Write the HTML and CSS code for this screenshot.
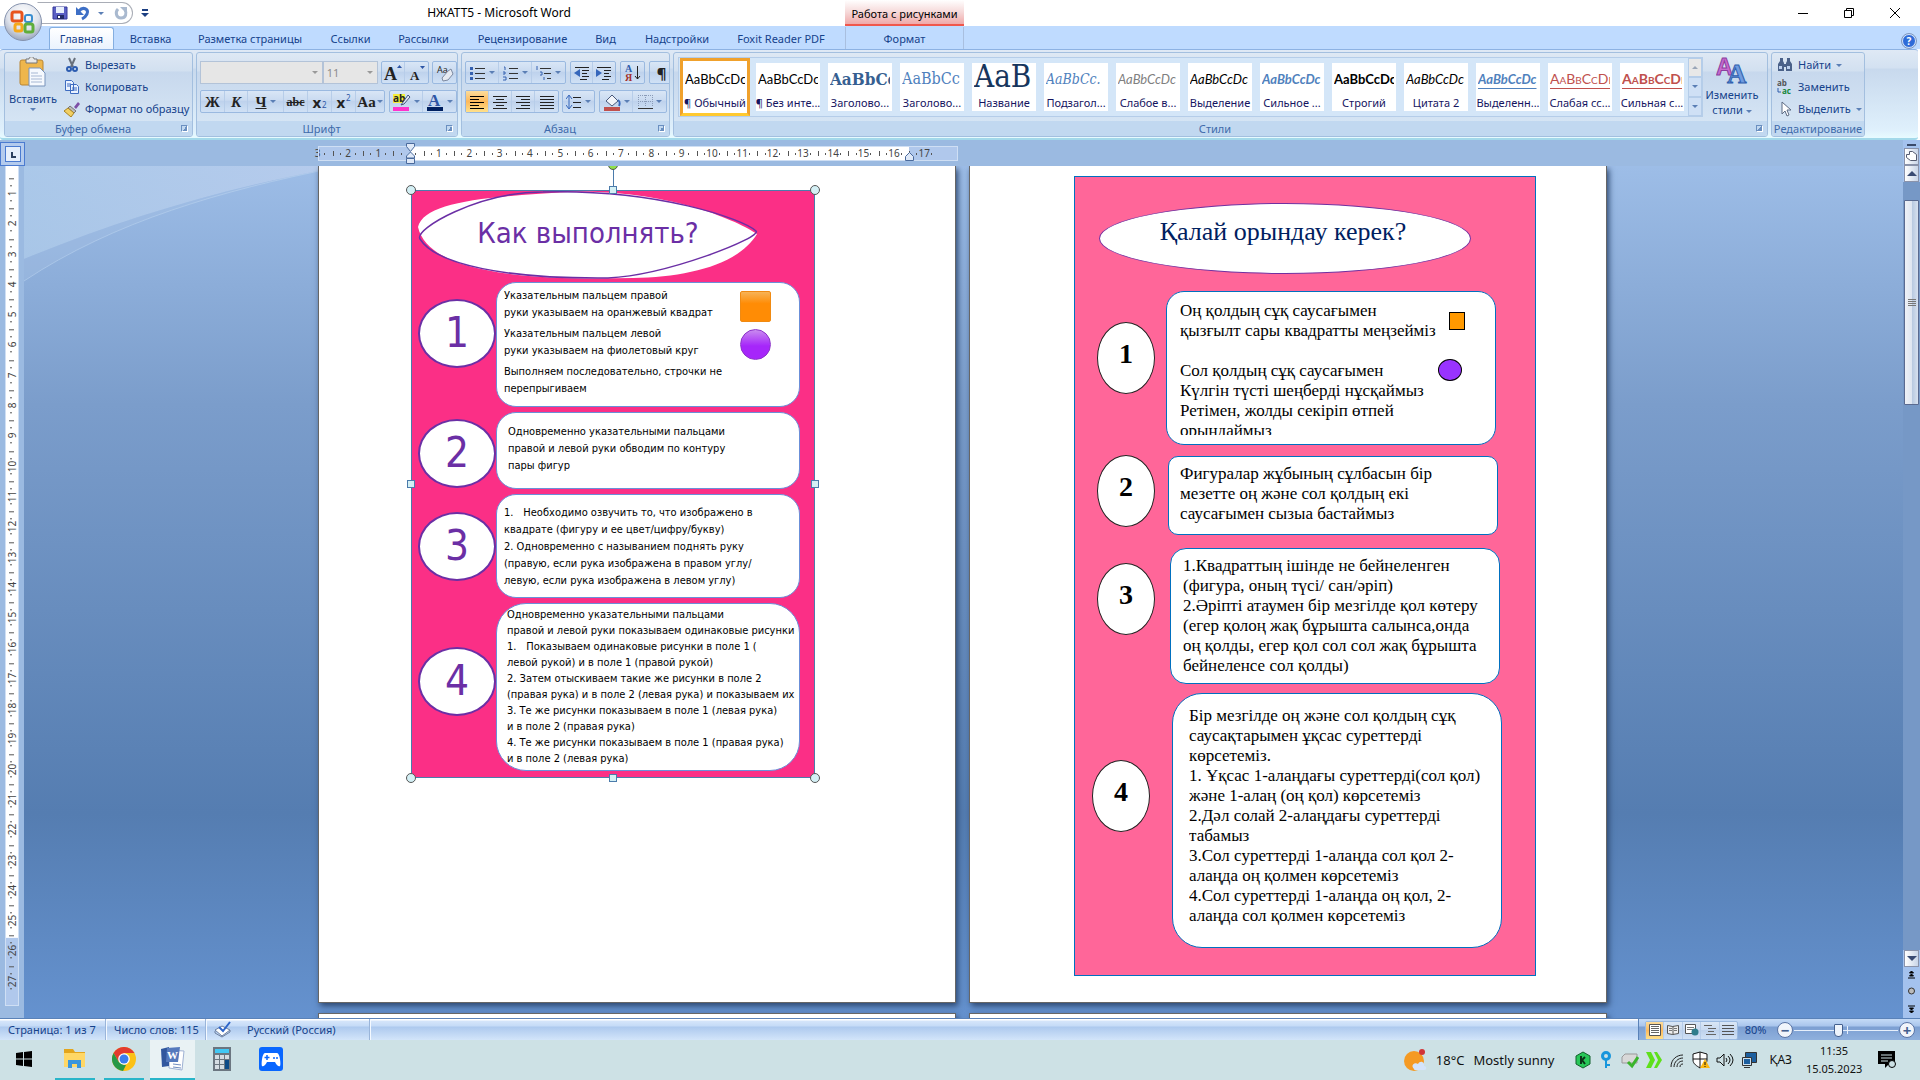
FILE: index.html
```html
<!DOCTYPE html>
<html lang="ru">
<head>
<meta charset="utf-8">
<title>НЖАТТ5 - Microsoft Word</title>
<link rel="stylesheet" href="styles.css">
</head>
<body>
<header class="titlebar">
  <div class="quick">
    <button class="flat" aria-label="Сохранить"><svg width="16" height="16" viewBox="0 0 16 16"><path d="M1 2h14v12H1z" fill="#5a5fc4" stroke="#34389a"/><path d="M4 2h8v6H4z" fill="#e8effc"/><path d="M5 10h7v4H5z" fill="#222a66"/><path d="M6 11h2v2H6z" fill="#fff"/></svg></button>
    <button class="flat" aria-label="Отменить"><svg width="16" height="16" viewBox="0 0 16 16"><path d="M4 6C8 1 14 4 12 9c-1 2-3 4-5 5" fill="none" stroke="#3d6fc6" stroke-width="3"/><path d="M1 2v8h8z" fill="#3d6fc6"/></svg></button>
    <i class="arrow"></i>
    <button class="flat" aria-label="Вернуть"><svg width="16" height="16" viewBox="0 0 16 16"><path d="M5 4C2 7 3 13 8 13s6-5 4-8" fill="none" stroke="#a9b9cf" stroke-width="3"/><path d="M7 2h7v7z" fill="#a9b9cf"/></svg></button>
  </div>
  <button class="flat customize" aria-label="Настройка панели"><svg width="8" height="9" viewBox="0 0 8 9"><path d="M1 0h6v2H1zM0 4h8L4 8z" fill="#1c3f82"/></svg></button>
  <h1 class="caption">НЖАТТ5 - Microsoft Word</h1>
  <div class="context-title">Работа с рисунками</div>
  <div class="window-buttons">
    <button class="flat" aria-label="Свернуть"><svg width="12" height="12"><path d="M1 6.500h10" stroke="#000"/></svg></button>
    <button class="flat" aria-label="Восстановить"><svg width="12" height="12"><path d="M1.500 3.500h7v7h-7zM3.500 3V1.500h7v7H9" fill="none" stroke="#000"/></svg></button>
    <button class="flat" aria-label="Закрыть"><svg width="12" height="12"><path d="M1 1l10 10M11 1L1 11" stroke="#000"/></svg></button>
  </div>
</header>

<button class="office" aria-label="Office"><svg width="40" height="40" viewBox="0 0 40 40"><defs><radialGradient id="orb" cx=".5" cy=".3" r=".7"><stop offset="0" stop-color="#fff"/><stop offset=".6" stop-color="#dfe3ec"/><stop offset="1" stop-color="#9aa6bd"/></radialGradient></defs><circle cx="20" cy="20" r="18.500" fill="url(#orb)" stroke="#8592ad"/><g fill="none" stroke-width="3"><rect x="9" y="10" width="10" height="9" rx="2" stroke="#e8541d"/><rect x="22" y="13" width="7" height="7" rx="2" stroke="#3b8ed0" stroke-width="2"/><rect x="12" y="22" width="7" height="7" rx="2" stroke="#f6a91b"/><rect x="22" y="22" width="8" height="8" rx="2" stroke="#5fae3b"/></g></svg></button>

<nav class="tabs">
  <a href="#" class="tab active">Главная</a><a href="#" class="tab">Вставка</a><a href="#" class="tab">Разметка страницы</a><a href="#" class="tab">Ссылки</a><a href="#" class="tab">Рассылки</a><a href="#" class="tab">Рецензирование</a><a href="#" class="tab">Вид</a><a href="#" class="tab">Надстройки</a><a href="#" class="tab">Foxit Reader PDF</a><a href="#" class="tab context">Формат</a>
  <button class="flat help" aria-label="Справка">?</button>
</nav>

<section class="ribbon">
  <div class="group clipboard">
    <div class="body">
      <button class="flat big"><svg width="28" height="30" viewBox="0 0 28 30"><rect x="1" y="3" width="23" height="25" rx="2" fill="#eeb64c" stroke="#b98532"/><path d="M7 2h3c0-3 5-3 5 0h3v4H7z" fill="#e8e8e8" stroke="#777"/><path d="M10 11h11l5 5v13H10z" fill="#f6f9fe" stroke="#7893bb"/><path d="M12 16h7M12 19h11M12 22h11M12 25h11" stroke="#a6b7d3"/></svg><span>Вставить</span><i class="arrow"></i></button>
      <div class="stack">
        <button class="flat row"><svg width="16" height="16" viewBox="0 0 16 16"><path d="M5 1l4 9M11 1L7 10" stroke="#68707c" stroke-width="2"/><circle cx="5" cy="12" r="2" fill="none" stroke="#2c5cb0" stroke-width="2"/><circle cx="11" cy="12" r="2" fill="none" stroke="#2c5cb0" stroke-width="2"/></svg>Вырезать</button>
        <button class="flat row"><svg width="16" height="16" viewBox="0 0 16 16"><path d="M1.500 1.500h6l2 2v8h-8zM6.500 5.500h6l2 2v7h-8z" fill="#eaf2ff" stroke="#3d6bc0"/><path d="M3 5h4M3 7h3M8 9h5M8 11h5" stroke="#3d6bc0"/></svg>Копировать</button>
        <button class="flat row"><svg width="16" height="16" viewBox="0 0 16 16"><path d="M10 6l4-5 2 2-4 5z" fill="#7d4fa6"/><path d="M6 5l6 5-2 2-6-5z" fill="#bbb" stroke="#777"/><path d="M4 7l6 5-3 4-7-6z" fill="#f2cf62" stroke="#a88322"/></svg>Формат по образцу</button>
      </div>
    </div>
    <footer><span>Буфер обмена</span><i class="launch"></i></footer>
  </div>

  <div class="group font">
    <div class="body tools">
      <div class="line">
        <label class="combo name"><select disabled aria-label="Шрифт"><option></option></select></label><label class="combo size"><select disabled aria-label="Размер шрифта"><option>11</option></select></label>
        <div class="set gap3"><button class="w23" aria-label="Увеличить размер"><svg width="20" height="18" viewBox="0 0 20 18"><text x="1" y="16" font-size="18" font-weight="bold" font-family="Liberation Serif" fill="#222">A</text><path d="M14 4h5l-2.500-3z" fill="#2d55a5"/></svg></button><button class="w23" aria-label="Уменьшить размер"><svg width="20" height="18" viewBox="0 0 20 18"><text x="3" y="16" font-size="13" font-weight="bold" font-family="Liberation Serif" fill="#222">A</text><path d="M13 2h5l-2.500 3z" fill="#2d55a5"/></svg></button></div>
        <div class="set gap3"><button class="w23" aria-label="Очистить формат"><svg width="18" height="18" viewBox="0 0 18 18"><text x="1" y="9" font-size="9" font-family="Open Sans" fill="#222">Aa</text><path d="M12 7l3-2 2 5-5 6-5 1-1-3z" fill="#e6eaf2" stroke="#7c89a0"/></svg></button></div>
      </div>
      <div class="line">
        <div class="set"><button class="w24 serif"><b class="t14">Ж</b></button><button class="w23 serif"><b class="t14"><i>К</i></b></button><button class="w36 serif"><b class="t14"><u>Ч</u></b><i class="arrow"></i></button><button class="w24 serif"><b class="t12"><s>abc</s></b></button><button class="w24"><b class="t14">x</b><sub>2</sub></button><button class="w24"><b class="t14">x</b><sup>2</sup></button><button class="w28 serif"><b class="t14">Aa</b><i class="arrow"></i></button></div>
        <div class="set gap4"><button class="w33" aria-label="Цвет выделения"><svg width="18" height="18" viewBox="0 0 18 18"><path d="M0 1h12v9H0z" fill="#f5ee3b"/><text x="0" y="9" font-size="10" font-weight="bold" font-family="Open Sans" fill="#222">ab</text><path d="M15 2l2 2-6 7-3 1z" fill="#dfe6f5" stroke="#44567c"/><path d="M0 14h16v4H0z" fill="#ff33cc"/></svg><i class="arrow"></i></button><button class="w33" aria-label="Цвет текста"><svg width="18" height="18" viewBox="0 0 18 18"><text x="2" y="13" font-size="17" font-weight="bold" font-family="Liberation Serif" fill="#2d55a5">A</text><path d="M1 14h16v4H1z" fill="#002060"/></svg><i class="arrow"></i></button></div>
      </div>
    </div>
    <footer><span>Шрифт</span><i class="launch"></i></footer>
  </div>

  <div class="group para">
    <div class="body tools">
      <div class="line">
        <div class="set"><button class="w33" aria-label="Маркеры"><svg width="16" height="16"><path d="M5 3.500h10M5 8.500h10M5 13.500h10" stroke="#333"/><path d="M0 2h3v3H0zM0 7h3v3H0zM0 12h3v3H0z" fill="#3460b0"/></svg><i class="arrow"></i></button><button class="w33" aria-label="Нумерация"><svg width="16" height="16"><path d="M6 3.500h9M6 8.500h9M6 13.500h9" stroke="#333"/><path d="M1 2h1v3M0 7h2v2H0M0 12h3v3H0" fill="none" stroke="#3460b0"/></svg><i class="arrow"></i></button><button class="w33" aria-label="Многоуровневый список"><svg width="16" height="16"><path d="M4 3.500h11M8 8.500h7M11 13.500h4" stroke="#333"/><path d="M1 1v4M4 7h2v3H4M8 12v3" fill="none" stroke="#3460b0"/></svg><i class="arrow"></i></button></div>
        <div class="set gap4"><button class="w22" aria-label="Уменьшить отступ"><svg width="16" height="16"><path d="M1 2.500h14M8 5.500h7M8 8.500h5M8 11.500h7M6 14.500h7" stroke="#222"/><path d="M6 4v8L0 8z" fill="#3566bb"/></svg></button><button class="w22" aria-label="Увеличить отступ"><svg width="16" height="16"><path d="M1 2.500h14M8 5.500h7M8 8.500h5M8 11.500h7M6 14.500h7" stroke="#222"/><path d="M0 4v8l6-4z" fill="#3566bb"/></svg></button></div>
        <div class="set gap4"><button class="w23" aria-label="Сортировка"><svg width="16" height="18" viewBox="0 0 16 18"><text y="8" font-size="10" font-weight="bold" font-family="Liberation Serif" fill="#2f5cab">А</text><text y="17" font-size="10" font-weight="bold" font-family="Liberation Serif" fill="#a5302b">Я</text><path d="M12.500 2v13M10 12l2.500 3 2.500-3" fill="none" stroke="#222"/></svg></button></div>
        <div class="set gap4"><button class="w23"><b class="t14">¶</b></button></div>
      </div>
      <div class="line">
        <div class="set"><button class="w23 on" aria-label="По левому краю"><svg width="16" height="16"><path d="M1 2.500h14M1 5.500h9M1 8.500h14M1 11.500h9M1 14.500h14" stroke="#000"/></svg></button><button class="w23" aria-label="По центру"><svg width="16" height="16"><path d="M1 2.500h14M4 5.500h8M1 8.500h14M4 11.500h8M1 14.500h14" stroke="#222"/></svg></button><button class="w23" aria-label="По правому краю"><svg width="16" height="16"><path d="M1 2.500h14M6 5.500h9M1 8.500h14M6 11.500h9M1 14.500h14" stroke="#222"/></svg></button><button class="w23" aria-label="По ширине"><svg width="16" height="16"><path d="M1 2.500h14M1 5.500h14M1 8.500h14M1 11.500h14M1 14.500h14" stroke="#222"/></svg></button></div>
        <div class="set gap3"><button class="w31" aria-label="Интервал"><svg width="16" height="16"><path d="M7 3.500h8M7 8.500h8M7 13.500h8" stroke="#222"/><path d="M3 2v12M0 5l3-4 3 4M0 11l3 4 3-4" fill="none" stroke="#3566bb"/></svg><i class="arrow"></i></button></div>
        <div class="set gap4"><button class="w33" aria-label="Заливка"><svg width="18" height="18"><path d="M3 8l6-6 6 6-6 5z" fill="#f1f4fa" stroke="#48587a"/><path d="M15 7c3 2 1 6 1 6" stroke="#3566bb" stroke-width="2" fill="none"/><path d="M1 14h16v4H1z" fill="#c0504d"/></svg><i class="arrow"></i></button><button class="w33" aria-label="Границы"><svg width="16" height="16"><path d="M1.500 1v12M8.500 1v12M15.500 1v12M1 1.500h14M1 7.500h14" stroke="#8a9bb8" stroke-dasharray="1 1"/><path d="M1 14.500h15" stroke="#333"/></svg><i class="arrow"></i></button></div>
      </div>
    </div>
    <footer><span>Абзац</span><i class="launch"></i></footer>
  </div>

  <div class="group styles">
    <div class="body">
      <div class="gallery">
        <button class="style sel"><span class="pv">AaBbCcDc</span><span>¶ Обычный</span></button>
        <button class="style"><span class="pv">AaBbCcDc</span><span>¶ Без инте...</span></button>
        <button class="style"><span class="pv h1s">AaBbCc</span><span>Заголово...</span></button>
        <button class="style"><span class="pv h2s">AaBbCc</span><span>Заголово...</span></button>
        <button class="style"><span class="pv ttl">AaB</span><span>Название</span></button>
        <button class="style"><span class="pv sub">AaBbCc.</span><span>Подзагол...</span></button>
        <button class="style"><span class="pv weak">AaBbCcDc</span><span>Слабое в...</span></button>
        <button class="style"><span class="pv em">AaBbCcDc</span><span>Выделение</span></button>
        <button class="style"><span class="pv em strong blue">AaBbCcDc</span><span>Сильное ...</span></button>
        <button class="style"><span class="pv strong">AaBbCcDc</span><span>Строгий</span></button>
        <button class="style"><span class="pv em">AaBbCcDc</span><span>Цитата 2</span></button>
        <button class="style"><span class="pv em strong blue lined">AaBbCcDc</span><span>Выделенн...</span></button>
        <button class="style"><span class="pv red lined caps">AaBbCcDd</span><span>Слабая сс...</span></button>
        <button class="style"><span class="pv red strong lined caps">AaBbCcDd</span><span>Сильная с...</span></button>
        <div class="spin"><button class="off" aria-label="Вверх"><i class="arrow up"></i></button><button aria-label="Вниз"><i class="arrow"></i></button><button aria-label="Все стили"><i class="arrow bar"></i></button></div>
      </div>
      <button class="flat big change"><svg width="32" height="28" viewBox="0 0 32 28"><text x="0" y="18" font-size="23" font-weight="bold" font-family="Liberation Sans" fill="#c86ad0" stroke="#8c3f9e">A</text><text x="11" y="26" font-size="27" font-weight="bold" font-family="Liberation Serif" fill="#6f9be0" stroke="#2f5fae">A</text></svg><span>Изменить</span><span>стили <i class="arrow"></i></span></button>
    </div>
    <footer><span>Стили</span><i class="launch"></i></footer>
  </div>

  <div class="group editing">
    <div class="body"><div class="stack">
      <button class="flat row"><svg width="16" height="16" viewBox="0 0 16 16"><path d="M3 1h3v3l1 2v8H1V7l2-3zM10 1h3v3l2 3v7H9V6l1-2zM6 7h4v3H6z" fill="#4a6189"/><path d="M2 9h3v3H2zM10 9h3v3h-3z" fill="#bcd0ee"/></svg>Найти <i class="arrow"></i></button>
      <button class="flat row"><svg width="16" height="16" viewBox="0 0 16 16"><text x="0" y="7" font-size="8" font-weight="bold" font-family="Open Sans" fill="#555">ab</text><text x="5" y="15" font-size="8" font-weight="bold" font-family="Open Sans" fill="#15863a">ac</text><path d="M1 9v4h3" fill="none" stroke="#2f5cab"/></svg>Заменить</button>
      <button class="flat row"><svg width="16" height="16" viewBox="0 0 16 16"><path d="M5 1v12l3-3 2 5 2-1-2-5h4z" fill="#fff" stroke="#5d6b83"/></svg>Выделить <i class="arrow"></i></button>
    </div></div>
    <footer><span>Редактирование</span></footer>
  </div>
</section>

<main class="workspace">
  <div class="corner"><button class="tabstop" aria-label="Табуляция"></button></div>
  <div class="hruler-row">
    <div class="hruler">
      <span class="first">3</span><span>2</span><span>1</span><span></span><span>1</span><span>2</span><span>3</span><span>4</span><span>5</span><span>6</span><span>7</span><span>8</span><span>9</span><span>10</span><span>11</span><span>12</span><span>13</span><span>14</span><span>15</span><span>16</span><span>17</span>
      <svg class="indent left" width="9" height="22" viewBox="0 0 9 22"><path d="M.500.500h8v3l-4 5-4-5zM.500 15v-2l4-4 4 4v2zM.500 15.500h8v5h-8z" fill="#dfe9f8" stroke="#4a6a9c"/></svg>
      <svg class="indent right" width="9" height="9" viewBox="0 0 9 9"><path d="M.500 8.500v-4l4-4 4 4v4z" fill="#dfe9f8" stroke="#4a6a9c"/></svg>
    </div>
  </div>
  <div class="scroll">
    <i class="split"></i>
    <button class="sb" aria-label="Линейка"><svg width="13" height="13"><path d="M1.500 4.500h3v-3h3l4 3v6h-6l-4-3z" fill="#fff" stroke="#555b70"/></svg></button>
    <button class="sb" aria-label="Вверх"><i class="tri up"></i></button>
    <div class="track"><div class="thumb"></div></div>
    <button class="sb" aria-label="Вниз"><i class="tri"></i></button>
    <div class="browse"><svg width="9" height="50" viewBox="0 0 9 50"><path d="M4.500 4l2 2h-4zM4.500 7l2 2h-4zM1 11h7M4.500 43l2-2h-4zM4.500 46l2-2h-4zM1 39h7" stroke="#000" fill="#000"/><circle cx="4.500" cy="24" r="3" fill="#bbb" stroke="#333"/></svg></div>
  </div>
  <div class="vruler-col"><div class="vruler"><div class="scale">
    <span>1</span><span>2</span><span>3</span><span>4</span><span>5</span><span>6</span><span>7</span><span>8</span><span>9</span><span>10</span><span>11</span><span>12</span><span>13</span><span>14</span><span>15</span><span>16</span><span>17</span><span>18</span><span>19</span><span>20</span><span>21</span><span>22</span><span>23</span><span>24</span><span>25</span><span>26</span><span>27</span>
  </div></div></div>

  <div class="canvas">
    <svg class="swoosh" width="310" height="120" viewBox="0 0 310 120"><defs><linearGradient id="sw" x2="1" y2="0"><stop offset="0" stop-color="#aecbea"/><stop offset="1" stop-color="#bccfee"/></linearGradient></defs><path d="M0 0h310v2C200 22 100 52 0 93z" fill="url(#sw)" opacity=".8"/><path d="M0 93C100 52 200 22 310 2C200 24 90 55 0 115z" fill="#a9c4e6" opacity=".35"/><path d="M0 115C90 55 200 24 310 2" fill="none" stroke="#b9d2ee" opacity=".6"/></svg>
    <article class="page p1">
      <div class="picture">
        <div class="ph"><svg class="blob" viewBox="0 0 340 88" preserveAspectRatio="none"><path d="M0 36C6 12 60 6 150 1C250-2 320 30 339 43C320 74 270 86 215 87C100 90 10 80 0 36z" fill="#fff"/><path d="M2 48C-4 38 60 1 125 1C240-2 325 28 338 40C345 46 250 84 190 87C90 88 18 74 2 48z" fill="none" stroke="#6b2fa5" stroke-width="1.500"/></svg><h2>Как выполнять?</h2></div>
        <div class="prow r1"><b class="num">1</b><div class="pbox"><p>Указательным пальцем правой<br>руки указываем на оранжевый квадрат</p><p>Указательным пальцем левой<br>руки указываем на фиолетовый круг</p><p>Выполняем последовательно, строчки не<br>перепрыгиваем</p><div class="marks"><i class="sq"></i><i class="ci"></i></div></div></div>
        <div class="prow r2"><b class="num">2</b><div class="pbox"><p>Одновременно указательными пальцами<br>правой и левой руки обводим по контуру<br>пары фигур</p></div></div>
        <div class="prow r3"><b class="num">3</b><div class="pbox"><p>1.&emsp;Необходимо озвучить то, что изображено в<br>квадрате (фигуру и ее цвет/цифру/букву)<br>2. Одновременно с называнием поднять руку<br>(правую, если рука изображена в правом углу/<br>левую, если рука изображена в левом углу)</p></div></div>
        <div class="prow r4"><b class="num">4</b><div class="pbox"><p>Одновременно указательными пальцами<br>правой и левой руки показываем одинаковые рисунки<br>1.&emsp;Показываем одинаковые рисунки в поле 1 (<br>левой рукой) и в поле 1 (правой рукой)<br>2. Затем отыскиваем такие же рисунки в поле 2<br>(правая рука) и в поле 2 (левая рука) и показываем их<br>3. Те же рисунки показываем в поле 1 (левая рука)<br>и в поле 2 (правая рука)<br>4. Те же рисунки показываем в поле 1 (правая рука)<br>и в поле 2 (левая рука)</p></div></div>
        <i class="h c tl"></i><i class="h c tr"></i><i class="h c bl"></i><i class="h c br"></i><i class="h tm"></i><i class="h bm"></i><i class="h lm"></i><i class="h rm"></i><i class="stem"></i><i class="h c rot"></i>
      </div>
    </article>
    <article class="page p2">
      <div class="poster" lang="kk">
        <h2>Қалай орындау керек?</h2>
        <div class="krow k1"><b class="oval">1</b><div class="kbox"><p>Оң қолдың сұқ саусағымен<br>қызғылт сары квадратты меңзейміз<br><br>Сол қолдың сұқ саусағымен<br>Күлгін түсті шеңберді нұсқаймыз<br>Ретімен, жолды секіріп өтпей<br>орындаймыз</p><div class="kmarks"><i class="sq"></i><i class="ci"></i></div></div></div>
        <div class="krow k2"><b class="oval">2</b><div class="kbox"><p>Фигуралар жұбының сұлбасын бір<br>мезетте оң және сол қолдың екі<br>саусағымен сызыа бастаймыз</p></div></div>
        <div class="krow k3"><b class="oval">3</b><div class="kbox"><p>1.Квадраттың ішінде не бейнеленген<br>(фигура, оның түсі/ сан/әріп)<br>2.Әріпті атаумен бір мезгілде қол көтеру<br>(егер қолоң жақ бұрышта салынса,онда<br>оң қолды, егер қол сол сол жақ бұрышта<br>бейнеленсе сол қолды)</p></div></div>
        <div class="krow k4"><b class="oval">4</b><div class="kbox"><p>Бір мезгілде оң және сол қолдың сұқ<br>саусақтарымен ұқсас суреттерді<br>көрсетеміз.<br>1. Ұқсас 1-алаңдағы суреттерді(сол қол)<br>және 1-алаң (оң қол) көрсетеміз<br>2.Дәл солай 2-алаңдағы суреттерді<br>табамыз<br>3.Сол суреттерді 1-алаңда сол қол 2-<br>алаңда оң қолмен көрсетеміз<br>4.Сол суреттерді 1-алаңда оң қол, 2-<br>алаңда сол қолмен көрсетеміз</p></div></div>
      </div>
    </article>
    <article class="page next"></article>
    <article class="page next"></article>
  </div>
</main>

<footer class="status">
  <span class="cell s1">Страница: 1 из 7</span><span class="cell s2">Число слов: 115</span><span class="cell s3"><svg width="18" height="17" viewBox="0 0 18 17"><path d="M1 9l7-4 8 4-8 6z" fill="#fff" stroke="#6c7f9f"/><path d="M1 10v2l7 4 8-5V9" fill="none" stroke="#6c7f9f"/><path d="M5 6l4 4 7-9" fill="none" stroke="#2d64c8" stroke-width="2"/></svg>Русский (Россия)</span>
  <div class="viewzone">
    <div class="set views"><button class="on" aria-label="Разметка страницы"><svg width="12" height="12"><path d="M.500.500h11v11H.500z" fill="#fff" stroke="#555"/><path d="M2 2.500h8M2 4.500h8M2 6.500h8M2 8.500h8" stroke="#666"/></svg></button><button aria-label="Чтение"><svg width="12" height="12"><path d="M.500 1.500l5 1 6-1v8l-6 1-5-1zM6 2v9" fill="#eee" stroke="#555"/><path d="M2 4.500h3M2 6.500h3M7 4.500h3M7 6.500h3" stroke="#777"/></svg></button><button aria-label="Веб-документ"><svg width="14" height="12"><path d="M.500.500h10v9H.500z" fill="#fff" stroke="#555"/><path d="M2 3.500h7M2 5.500h7" stroke="#777"/><circle cx="10" cy="8" r="3.500" fill="#2f7d8c"/></svg></button><button aria-label="Структура"><svg width="12" height="12"><path d="M0 1.500h8M4 4.500h8M4 7.500h6M2 10.500h10" stroke="#666"/></svg></button><button aria-label="Черновик"><svg width="12" height="12"><path d="M0 1.500h12M0 4.500h12M0 7.500h12M0 10.500h12" stroke="#555"/></svg></button></div>
    <button class="flat pct">80%</button>
    <button class="round" aria-label="Уменьшить">−</button>
    <input class="zoom" type="range" min="0" max="100" value="42" aria-label="Масштаб">
    <button class="round" aria-label="Увеличить">+</button>
  </div>
</footer>

<footer class="taskbar">
  <button class="app start" aria-label="Пуск"><svg width="16" height="16" viewBox="0 0 16 16"><path d="M0 2l7-1v6.500H0zM8 1l8-1v7.500H8zM0 8.500h7V15l-7-1zM8 8.500h8V16l-8-1z" fill="#000"/></svg></button>
  <button class="app run" aria-label="Проводник"><svg width="24" height="20" viewBox="0 0 24 20"><path d="M1 0h9l2 3h10v15H1z" fill="#e3a51c"/><path d="M1 4h21v14H1z" fill="#ffd765"/><path d="M5 19v-8h13v8h-4v-4H9v4z" fill="#3a96dd"/></svg></button>
  <button class="app run" aria-label="Chrome"><svg width="24" height="24" viewBox="0 0 24 24"><circle cx="12" cy="12" r="12" fill="#fbc116"/><path d="M1.600 6A12 12 0 0 1 22.400 6H12L6.800 15z" fill="#e33b2e"/><path d="M1.600 6l5.200 9 5.200 3 2 0-3 6A12 12 0 0 1 1.600 6z" fill="#279847"/><circle cx="12" cy="12" r="5.800" fill="#fff"/><circle cx="12" cy="12" r="4.500" fill="#3b7ded"/></svg></button>
  <button class="app run current" aria-label="Word"><svg width="24" height="24" viewBox="0 0 24 24"><path d="M8 3l15 1-2 19-13-2z" fill="#fff" stroke="#9fb2d4"/><path d="M0 2l8-2v19l-7 1z" fill="#31579e"/><path d="M12 17l8 1M12 20l8 1" stroke="#6f8cc0"/><path d="M6 1l13-1-2 15H5z" fill="#5579bd"/><text x="6" y="12" font-size="11" font-weight="bold" font-family="Liberation Serif" fill="#fff">W</text></svg></button>
  <button class="app" aria-label="Калькулятор"><svg width="18" height="24" viewBox="0 0 18 24"><path d="M0 0h18v24H0z" fill="#6b7680"/><path d="M2 2h14v4H2z" fill="#42c8f4"/><path d="M2 8h4v4H2zM7 8h4v4H7zM12 8h4v4h-4zM2 13h4v4H2zM7 13h4v4H7zM2 18h4v4H2zM7 18h4v4H7z" fill="#d5dde3"/><path d="M12 13h4v9h-4z" fill="#0c4a86"/></svg></button>
  <button class="app" aria-label="Игры"><svg width="24" height="24" viewBox="0 0 24 24"><rect width="24" height="24" rx="3" fill="#0866ff"/><path d="M6 6h12c3 0 4 12 3 13s-3 0-5-4H8c-2 4-4 5-5 4S3 6 6 6z" fill="#fff"/><path d="M8 8v5M5.500 10.500h5" stroke="#0866ff" stroke-width="1.500"/><circle cx="15" cy="11" r="1" fill="#0866ff"/><circle cx="18" cy="11" r="1" fill="#0866ff"/></svg></button>
  <div class="tray">
    <button class="flat weather"><svg width="24" height="24" viewBox="0 0 24 24"><circle cx="11" cy="13" r="10" fill="#f59a23"/><path d="M11 21c-4-4 1-7 4-5 2-4 7-2 6 2 3 0 3 4 0 4h-8c-1 0-2 0-2-1z" fill="#d4e4fb"/><circle cx="19" cy="4" r="3" fill="#d13438"/></svg><span>18°C</span><span>Mostly sunny</span></button>
    <div class="icons">
    <svg width="16" height="18" viewBox="0 0 16 18"><path d="M8 1l7 4v8l-7 4-7-4V5z" fill="#28c758" stroke="#13602c"/><path d="M6 5v8M10 6L7 9l3 4" stroke="#0b3518" stroke-width="2" fill="none"/></svg>
    <svg width="16" height="18" viewBox="0 0 16 18"><circle cx="8" cy="5" r="3.500" fill="none" stroke="#1796dc" stroke-width="3"/><path d="M8 9v8M8 14h4" stroke="#1796dc" stroke-width="2"/></svg>
    <svg width="18" height="18" viewBox="0 0 18 18"><path d="M1 6l3-3h12v9H1z" fill="#d8d8d8" stroke="#999"/><path d="M7 11l4 4 6-9" stroke="#3ab52c" stroke-width="3" fill="none"/></svg>
    <svg width="16" height="18" viewBox="0 0 16 18"><path d="M0 1h5l4 8-4 8H0l4-8zM8 1h3l5 8-5 8H8l4-8z" fill="#5ee01a"/></svg>
    <svg width="16" height="18" viewBox="0 0 16 18"><path d="M2 16C2 8 8 4 14 4M5 16c0-5 4-9 9-9M8 16c0-4 3-6 6-6M11 16c0-2 1-3 3-3" stroke="#222" fill="none"/></svg>
    <svg width="18" height="18" viewBox="0 0 18 18"><path d="M8 1l7 2v6c0 4-4 6-7 8-3-2-7-4-7-8V3zM8 1v16M1 8h14" fill="#fff" stroke="#111"/><path d="M13 8l5 9H8z" fill="#fdb913"/><path d="M13 11v3M13 15v1" stroke="#111"/></svg>
    <svg width="18" height="18" viewBox="0 0 18 18"><path d="M1 7h3l4-4v12l-4-4H1zM10 7q2 2 0 4M12 5q4 4 0 8M14 3q6 6 0 12" fill="none" stroke="#111"/></svg>
    <svg width="16" height="18" viewBox="0 0 16 18"><path d="M4.500 1.500h11v10h-11z" fill="#1d5f9e" stroke="#333"/><path d="M1.500 6.500h9v8h-9z" fill="#cfe0ee" stroke="#333"/><path d="M3 8h6v5H3z" fill="#1d5f9e"/><path d="M3 16.500h6" stroke="#333"/></svg>
    </div>
    <span class="lang">ҚАЗ</span>
    <time class="clock">11:35<br>15.05.2023</time>
    <button class="flat note" aria-label="Уведомления"><svg width="18" height="18" viewBox="0 0 18 18"><path d="M0 0h17v13h-6l-4 4v-4H0z" fill="#000"/><path d="M3 4h11M3 7h11M3 10h7" stroke="#cde1e5"/><circle cx="14" cy="13" r="3.500" fill="#cde1e5" stroke="#000"/></svg></button>
  </div>
</footer>
</body>
</html>
```
FILE: styles.css
```css
* { box-sizing: border-box; }
body { margin: 0; height: 100vh; display: flex; flex-direction: column; overflow: hidden; position: relative; font: 11px/16px "Noto Sans", "Open Sans", sans-serif; color: #15428b; background: #fff; }
button { font: inherit; color: inherit; padding: 0; margin: 0; border: 0; background: none; }
h1, h2, p { margin: 0; font-weight: normal; }
svg { display: block; flex: none; }
.flat { display: flex; align-items: center; }
.arrow { display: inline-block; width: 0; height: 0; border: 3px solid transparent; border-top-color: #5b7fb5; border-bottom: 0; flex: none; vertical-align: middle; }
.arrow.up { border-top: 0; border-bottom: 3px solid #9aa6b8; }
.arrow.bar { box-shadow: 0 -3px 0 -2px #5b7fb5; }

/* Title bar and quick access */
.titlebar { flex: none; height: 26px; display: flex; align-items: center; padding-left: 37px; color: #000; }
.quick { width: 96px; height: 22px; display: flex; align-items: center; gap: 7px; padding-left: 14px; border: 1px solid #a9adb6; border-left-color: transparent; border-radius: 0 11px 11px 0; }
.quick .flat:last-child { margin-left: 2px; }
.customize { margin-left: 8px; }
.caption { flex: none; width: 142px; margin: 0 275px 0 279px; display: flex; justify-content: center; white-space: nowrap; font-size: 12px; }
.context-title { width: 119px; height: 26px; flex: none; text-align: center; line-height: 28px; background: linear-gradient(#fff, #f6d9d9 50%, #f0a9a9); border-bottom: 2px solid #f0574c; white-space: nowrap; }
.window-buttons { margin-left: auto; display: flex; gap: 34px; padding-right: 19px; }
.office { position: absolute; left: 3px; top: 2px; z-index: 2; }

/* Tabs */
.tabs { flex: none; height: 23px; display: grid; grid-template-columns: 65px 73px 126px 75px 71px 127px 39px 104px 104px 131px 1fr; justify-content: start; padding: 1px 4px 0 49px; background: #bfdbff; }
.tab { color: #15428b; text-decoration: none; text-align: center; line-height: 24px; white-space: nowrap; }
.tab.active { background: linear-gradient(#fff, #e4effd); border: 1px solid #84aee0; border-bottom: 0; border-radius: 3px 3px 0 0; line-height: 22px; }
.tab.context { border: solid #a9bfdf; border-width: 0 1px; margin: 0 0 4px 12px; }
.help { justify-self: end; align-self: center; width: 14px; height: 14px; border-radius: 7px; justify-content: center; background: #2f6bd8; border: 1px solid #d8e6fb; outline: 1px solid #7f97be; color: #fff; font-weight: bold; font-size: 10px; line-height: 12px; }

/* Ribbon */
.ribbon { flex: none; height: 91px; display: flex; gap: 3px; padding: 2px 0 1px 4px; margin-right: 2px; border: solid #8db2e3; border-width: 1px 0 2px; border-bottom-color: #a3d9ea; border-radius: 3px; background: linear-gradient(#dfe9f5, #d3e1f1 18px, #c8d9ed 19px, #dff0fc 80px, #e7fbff); }
.group { display: flex; flex-direction: column; border: 1px solid #a3bfdf; border-radius: 3px; background: linear-gradient(#dee8f4, #d2e0f0 18px, #c7d8ed 19px, #d9e8f6); overflow: hidden; flex: none; }
.group footer { height: 15px; flex: none; display: flex; align-items: center; background: #c1d8f0; color: #3e6aaa; text-align: center; padding-right: 4px; white-space: nowrap; }
.group footer span { flex: 1; }
.launch { width: 7px; height: 7px; border: 1px solid #6a8fc0; border-right-color: #fff; border-bottom-color: #fff; background: linear-gradient(135deg, transparent 50%, #6a8fc0 50%); }
.body { flex: 1; display: flex; min-height: 0; }
.clipboard { width: 189px; }
.font { width: 262px; }
.para { width: 209px; }
.styles { flex: 1; min-width: 0; }
.editing { width: 94px; margin-right: 53px; }
.editing footer { padding: 0; }
.big { flex-direction: column; width: 56px; padding-top: 4px; line-height: 15px; }
.big svg { margin-bottom: 4px; }
.big .arrow { margin-top: 2px; }
.stack { display: flex; flex-direction: column; padding-top: 1px; }
.row { height: 22px; gap: 5px; white-space: nowrap; }
.clipboard .stack { padding-left: 3px; }
.editing .stack { padding-left: 5px; }
.tools { flex-direction: column; padding: 8px 0 0 3px; gap: 6px; }
.line { display: flex; height: 23px; }
.combo { display: flex; position: relative; }
.combo::after { content: ""; position: absolute; right: 5px; top: 10px; border: 3px solid transparent; border-top-color: #999; border-bottom: 0; }
.combo select { appearance: none; width: 100%; border: 1px solid #b3c3d8; background: #e6e6e6; color: #8d8d8d; font: inherit; padding: 0 3px; opacity: 1; }
.combo.name { width: 124px; }
.combo.size { width: 56px; }
.set { display: flex; height: 23px; border: 1px solid #9ab9e0; border-radius: 2px; background: linear-gradient(#d9e6f6, #c9daf0 45%, #bdd1ec 46%, #d0e1f5); }
.set button { display: flex; align-items: center; justify-content: center; gap: 3px; border-right: 1px solid #b7cde9; color: #222; flex: 1; }
.set button:last-child { border-right: 0; }
.set .on { background: linear-gradient(#fbdc9c, #fdb95c 50%, #ffe08a); }
.gap3 { margin-left: 3px; }
.gap4 { margin-left: 4px; }
.w22 { min-width: 22px; }
.w23 { min-width: 23px; }
.w24 { min-width: 24px; }
.w28 { min-width: 28px; }
.w31 { min-width: 31px; }
.w33 { min-width: 33px; }
.w36 { min-width: 36px; }
.set sup, .set sub { font-size: 8px; line-height: 8px; color: #2d55a5; margin-left: -2px; }
.set sup { align-self: start; margin-top: 3px; }
.set sub { align-self: end; margin-bottom: 3px; }
.set .w28 { gap: 1px; }
.serif { font-family: "Liberation Serif", serif; }
.t12 { font-size: 12px; }
.t14 { font-size: 15px; }

/* Style gallery */
.styles .body { padding: 4px 6px 4px 4px; }
.gallery { flex: 1; display: flex; border: 1px solid #b5cde9; background: #d4e6f8; padding-left: 1px; }
.style { width: 72px; flex: none; display: flex; flex-direction: column; align-items: center; border: solid transparent; border-width: 5px 4px; background: #fff; background-clip: padding-box; color: #15155f; white-space: nowrap; overflow: hidden; }
.style.sel { width: 70px; margin-right: 2px; padding: 2px 1px; border: 3px solid #f0a12c; border-bottom-color: #ffc92f; }
.pv { height: 32px; width: 60px; line-height: 32px; overflow: hidden; text-align: left; font-family: "Lato", sans-serif; font-size: 13px; color: #000; flex: none; }
.h1s, .h2s, .ttl, .sub { font-family: "DejaVu Serif Condensed", "DejaVu Serif", serif; color: #365f91; }
.h1s { font-weight: bold; font-size: 17px; }
.h2s { color: #4f81bd; font-size: 16px; }
.ttl { color: #17365d; font-size: 31px; line-height: 26px; }
.sub { font-style: italic; color: #4f81bd; font-size: 14px; }
.weak { font-style: italic; color: #808080; }
.em { font-style: italic; }
.strong { font-weight: bold; }
.blue { color: #4f81bd; }
.red { color: #c0504d; }
.caps { font-variant: small-caps; font-size: 14px; }
.lined { text-decoration: underline; text-underline-offset: 4px; }
.spin { margin-left: auto; width: 14px; display: flex; flex-direction: column; }
.spin button { flex: 1; display: flex; align-items: center; justify-content: center; border: 1px solid #b5cde9; background: #cfe0f5; }
.spin .off { background: #e8e8e8; }
.change { width: 58px; padding-top: 0; line-height: 15px; flex: none; }
.change svg { margin-bottom: 2px; }
.change .arrow { margin-top: 0; }

/* Workspace: rulers, scroll bar, canvas */
.workspace { flex: 1; min-height: 0; display: grid; grid-template-columns: 24px minmax(0, 1fr) 17px; grid-template-rows: 26px minmax(0, 1fr); background: #9bbae1; }
.corner { padding-top: 2px; }
.tabstop { width: 25px; height: 24px; border: 1px solid #4b7bd0; background: #b4cbed; display: flex; align-items: center; justify-content: center; }
.tabstop::before { content: ""; width: 14px; height: 14px; border: 1px solid #4b7bd0; background: linear-gradient(#2c405f, #2c405f) 5px 5px / 2px 5px no-repeat, linear-gradient(#2c405f, #2c405f) 5px 9px / 5px 2px no-repeat, #e6effb; }
.hruler-row { display: flex; justify-content: center; align-items: start; padding-top: 7px; }
.hruler { position: relative; width: 638px; margin-right: 652px; height: 13px; display: flex; padding-right: 17px; background: linear-gradient(90deg, #b0c8ec 91px, #fff 91px, #fff 590px, #b0c8ec 590px); outline: 1px solid #cfdff4; }
.hruler span { flex: 1 1 0; width: 0; text-align: center; font-size: 10px; line-height: 13px; color: #444; background: linear-gradient(#555, #555) 0 4px / 1px 5px no-repeat, linear-gradient(#555, #555) 25% 6px / 1px 2px no-repeat, linear-gradient(#555, #555) 75% 6px / 1px 2px no-repeat; }
.hruler .first { margin-left: -16px; background: linear-gradient(#555, #555) 75% 6px / 1px 2px no-repeat; }
.indent { position: absolute; }
.indent.left { left: 87px; top: -4px; }
.indent.right { left: 586px; top: 5px; }
.scroll { grid-column: 3; grid-row: 1 / 3; display: flex; flex-direction: column; background: #a4c2ee; padding-top: 4px; }
.split { width: 9px; height: 2px; background: #3a4a6a; margin: 0 4px 2px; flex: none; }
.sb { height: 17px; flex: none; display: flex; align-items: center; justify-content: center; border: 1px solid #8a93ab; background: linear-gradient(90deg, #fff, #c9d5e8); margin: 0 1px; }
.tri { border: 5px solid transparent; border-top-color: #394a72; border-bottom: 0; }
.tri.up { border-top: 0; border-bottom: 5px solid #394a72; }
.track { flex: 1; padding: 18px 1px; background: #7698c6; }
.thumb { height: 28%; border: 1px solid #5a6a90; border-radius: 1px; background: repeating-linear-gradient(#777 0 1px, transparent 1px 2px) center / 8px 7px no-repeat, linear-gradient(90deg, #eef1f7, #dfe6f1 50%, #b8c9e0 55%, #d7e1ef); }
.browse { height: 51px; flex: none; display: flex; justify-content: center; }
.vruler-col { padding: 0 5px 12px; }
.vruler { height: 100%; padding: 12px 0 9px; border: solid #cfdff4; border-width: 0 1px 1px; background: linear-gradient(#fff, #fff) 0 0 / 100% 92% no-repeat, #b0c8ec; }
.scale { height: 100%; display: flex; flex-direction: column; }
.scale span { flex: 1 1 0; height: 0; writing-mode: vertical-rl; transform: rotate(180deg); text-align: center; font-size: 10px; line-height: 12px; color: #444; background: linear-gradient(#555, #555) 4px 100% / 5px 1px no-repeat, linear-gradient(#555, #555) 6px 25% / 2px 1px no-repeat, linear-gradient(#555, #555) 6px 75% / 2px 1px no-repeat; }

.canvas { position: relative; overflow: hidden; display: grid; grid-template-columns: 638px 638px; grid-template-rows: 837px 20px; gap: 10px 13px; justify-content: center; padding-right: 2px; background: linear-gradient(#9dbde7, #7b9dcb 28%, #557db1 76%, #6592cf); }
.swoosh { position: absolute; left: 0; top: 0; }
.page { position: relative; background: #fff; border: 1px solid #666; border-top: 0; box-shadow: 2px 3px 6px #2c4770; overflow: hidden; }
.page.next { border-top: 1px solid #666; }

/* Left page: selected picture */
.p1 { padding: 24px 0 0 92px; }
.picture { position: relative; width: 404px; height: 588px; border: 1px solid #4b7bab; background: #fb2f86; color: #000; padding-left: 6px; font: 11px/17px "DejaVu Sans Condensed", "DejaVu Sans", sans-serif; }
.ph { position: relative; width: 340px; height: 88px; display: flex; align-items: center; justify-content: center; margin-bottom: 3px; }
.blob { position: absolute; inset: 0; width: 100%; height: 100%; }
.ph h2 { position: relative; font-size: 29px; line-height: 40px; color: #6b2fa5; margin-bottom: 4px; }
.prow { display: flex; align-items: center; margin-bottom: 5px; }
.num { width: 78px; height: 69px; border-radius: 50%; border: 2px solid #6b2fa5; background: #fff; color: #6b2fa5; font-weight: normal; font-size: 42px; line-height: 64px; text-align: center; flex: none; }
.r1 .num { align-self: start; margin-top: 17px; }
.r2 .num { margin-top: 5px; }
.r4 .num { margin-bottom: 12px; }
.pbox { width: 304px; border: 1px solid #6b8fd8; border-radius: 20px; background: #fff; display: flex; flex-direction: column; justify-content: center; white-space: nowrap; padding-left: 7px; position: relative; flex: none; }
.r1 .pbox { height: 125px; justify-content: start; padding-top: 4px; }
.r1 p { margin-bottom: 4px; }
.r2 .pbox { height: 77px; padding: 0 0 4px 11px; }
.r3 .pbox { height: 104px; }
.r4 .pbox { height: 168px; padding-left: 10px; border-radius: 30px; line-height: 16px; }
.marks { position: absolute; right: 28px; top: 8px; display: flex; flex-direction: column; gap: 7px; }
.marks i { width: 31px; height: 31px; }
.marks .sq { background: linear-gradient(#f7b357, #ff8c05 40%); border: 1px solid #f08a12; border-radius: 2px; }
.marks .ci { border-radius: 50%; background: linear-gradient(#c98bef, #a626fa 55%); border: 1px solid #8d33c9; }
.h { position: absolute; width: 8px; height: 8px; background: #d4f0f5; border: 1px solid #4b7bab; }
.h.c { width: 10px; height: 10px; border-radius: 50%; border-color: #555; }
.tl { left: -6px; top: -6px; }
.tr { right: -6px; top: -6px; }
.bl { left: -6px; bottom: -6px; }
.br { right: -6px; bottom: -6px; }
.tm { left: 197px; top: -5px; }
.bm { left: 197px; bottom: -5px; }
.lm { left: -5px; top: 289px; }
.rm { right: -5px; top: 289px; }
.stem { position: absolute; left: 201px; top: -24px; height: 19px; border-left: 1px solid #4b7bab; }
.h.rot { left: 196px; top: -31px; background: #8fe04a; }

/* Right page: drawn poster */
.p2 { padding: 10px 0 0 104px; }
.poster { width: 462px; height: 800px; border: 1px solid #0070c0; background: #ff6699; padding: 26px 0 0 24px; color: #000; font: 17px/20px "Liberation Serif", serif; }
.poster h2 { width: 372px; height: 71px; border: 1px solid #7030a0; border-radius: 50%; background: #fff; color: #002060; font-size: 26px; line-height: 56px; text-align: center; margin-bottom: 17px; padding-right: 4px; }
.krow { display: flex; align-items: start; margin-left: -2px; }
.oval { width: 58px; height: 72px; flex: none; border: 1px solid #222; border-radius: 50%; background: #fff; font-size: 28px; line-height: 62px; text-align: center; }
.kbox { width: 330px; flex: none; border: 1px solid #0070c0; background: #fff; white-space: nowrap; position: relative; }
.kbox p { overflow: hidden; }
.k1 .oval { margin: 31px 11px 0 0; }
.k1 .kbox { height: 154px; border-radius: 18px; padding: 9px 0 0 13px; }
.k1 p { height: 134px; }
.k2 { margin-top: 10px; }
.k2 .oval { margin-right: 13px; }
.k2 .kbox { height: 79px; border-radius: 10px; padding: 7px 0 0 11px; margin-top: 1px; }
.k3 { margin-top: 13px; }
.k3 .oval { margin: 15px 15px 0 0; }
.k3 .kbox { height: 136px; border-radius: 16px; padding: 7px 0 0 12px; }
.k4 { margin: 9px 0 0 -7px; }
.k4 .oval { margin: 67px 22px 0 0; }
.k4 .kbox { height: 255px; border-radius: 30px; padding: 12px 0 0 16px; }
.kmarks { position: absolute; right: 30px; top: 20px; display: flex; flex-direction: column; align-items: end; gap: 29px; }
.kmarks .sq { width: 16px; height: 18px; background: #ff9900; border: 1px solid #000; }
.kmarks .ci { width: 24px; height: 22px; margin-right: 3px; background: #9933ff; border: 1px solid #000; border-radius: 50%; }

/* Status bar */
.status { flex: none; height: 22px; border-top: 1px solid #5a82b8; background: linear-gradient(#fff 0 1px, #d5e5fa 2px, #c5dbf7 7px, #adc9ee 8px, #d3e5fa); display: flex; }
.cell { display: flex; align-items: center; padding-left: 8px; border-right: 1px solid #9ab5da; box-shadow: 1px 0 #f4f9ff; white-space: nowrap; }
.s1 { width: 106px; }
.s2 { width: 100px; }
.s3 { width: 164px; gap: 15px; }
.viewzone { margin-left: auto; width: 282px; padding: 1px 5px 0 6px; display: flex; align-items: center; border-left: 1px solid #5a82b8; background: linear-gradient(#c5dbf7, #a9c5ec 7px, #7c9fd2 8px, #8fb0dd); }
.views { width: 93px; height: 19px; flex: none; }
.pct { width: 35px; justify-content: center; }
.round { width: 16px; height: 16px; flex: none; border: 1px solid #5a74a5; border-radius: 8px; background: #f1f5fb; line-height: 12px; font-size: 15px; font-weight: bold; color: #44608f; margin: 0 4px; }
.round:last-child { margin-right: 0; }
.zoom { appearance: none; flex: 1; min-width: 0; margin: 0 -3px; height: 16px; background: linear-gradient(#e6effb, #e6effb) 50% 8px / 100% 1px no-repeat, linear-gradient(#e6effb, #e6effb) 51% 50% / 1px 8px no-repeat; }
.zoom::-webkit-slider-thumb { appearance: none; width: 9px; height: 13px; border: 1px solid #44608f; border-radius: 1px 1px 4px 4px; background: #eef4fc; }

/* Taskbar */
.taskbar { flex: none; height: 40px; display: flex; background: #cde1e5; color: #111; }
.app { width: 40px; margin-right: 9px; display: flex; align-items: center; justify-content: center; border-bottom: 2px solid transparent; }
.app.start { width: 46px; margin: 0 8px 0 1px; }
.app.run { border-bottom-color: #29b5c9; }
.app.current { background: #e9f2f4; width: 45px; margin: 0 7px 0 -3px; }
.tray { margin-left: auto; display: flex; align-items: center; padding-right: 24px; }
.weather { gap: 9px; font-size: 13px; }
.icons { display: flex; align-items: center; justify-content: space-between; width: 182px; margin-left: 21px; }
.lang { margin-left: 12px; font-size: 12px; }
.clock { width: 56px; margin-left: 14px; text-align: center; line-height: 18px; }
.note { margin-left: 16px; }
```
